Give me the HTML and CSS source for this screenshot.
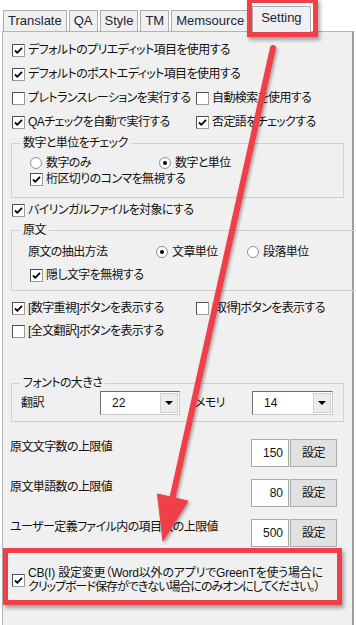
FILE: index.html
```html
<!DOCTYPE html>
<html lang="ja">
  <head>
    <meta charset="UTF-8" />
    <meta name="viewport" content="width=device-width, initial-scale=1.0" />
    <title>Setting</title>
    <link rel="stylesheet" href="styles.css">
  </head>
  <body>
    <div class="window">
      <div class="tabs">
        <div class="tab">Translate</div>
        <div class="tab">QA</div>
        <div class="tab">Style</div>
        <div class="tab">TM</div>
        <div class="tab">Memsource</div>
        <div class="tab active">Setting</div>
      </div>

      <div class="panel">
        <div class="row">
          <span class="box on"><svg viewBox="0 0 11 11"><path d="M2 5.5 L4.3 7.8 L9 2.8" /></svg></span>
          デフォルトのプリエディット項目を使用する
        </div>
        <div class="row">
          <span class="box on"><svg viewBox="0 0 11 11"><path d="M2 5.5 L4.3 7.8 L9 2.8" /></svg></span>
          デフォルトのポストエディット項目を使用する
        </div>
        <div class="row">
          <div class="col"><span class="box"></span>プレトランスレーションを実行する</div>
          <div class="col"><span class="box"></span>自動検索を使用する</div>
        </div>
        <div class="row">
          <div class="col">
            <span class="box on"><svg viewBox="0 0 11 11"><path d="M2 5.5 L4.3 7.8 L9 2.8" /></svg></span>QAチェックを自動で実行する
          </div>
          <div class="col">
            <span class="box on"><svg viewBox="0 0 11 11"><path d="M2 5.5 L4.3 7.8 L9 2.8" /></svg></span>否定語をチェックする
          </div>
        </div>

        <fieldset class="group units">
          <legend>数字と単位をチェック</legend>
          <div class="row sm">
            <div class="col narrow"><span class="radio"></span>数字のみ</div>
            <div class="col"><span class="radio on"></span>数字と単位</div>
          </div>
          <div class="row sm">
            <span class="box on"><svg viewBox="0 0 11 11"><path d="M2 5.5 L4.3 7.8 L9 2.8" /></svg></span>桁区切りのコンマを無視する
          </div>
        </fieldset>

        <div class="row">
          <span class="box on"><svg viewBox="0 0 11 11"><path d="M2 5.5 L4.3 7.8 L9 2.8" /></svg></span>
          バイリンガルファイルを対象にする
        </div>

        <fieldset class="group source">
          <legend>原文</legend>
          <div class="row">
            <div class="col method">原文の抽出方法</div>
            <div class="col by-sentence"><span class="radio on"></span>文章単位</div>
            <div class="col"><span class="radio"></span>段落単位</div>
          </div>
          <div class="row md">
            <span class="box on"><svg viewBox="0 0 11 11"><path d="M2 5.5 L4.3 7.8 L9 2.8" /></svg></span>隠し文字を無視する
          </div>
        </fieldset>

        <div class="row buttons-first">
          <div class="col">
            <span class="box on"><svg viewBox="0 0 11 11"><path d="M2 5.5 L4.3 7.8 L9 2.8" /></svg></span>[数字重視]ボタンを表示する
          </div>
          <div class="col"><span class="box"></span>[取得]ボタンを表示する</div>
        </div>
        <div class="row md">
          <span class="box"></span>[全文翻訳]ボタンを表示する
        </div>

        <fieldset class="group font">
          <legend>フォントの大きさ</legend>
          <div class="row">
            <div class="field-label">翻訳</div>
            <div class="select"><span class="val">22</span><span class="drop"></span></div>
            <div class="field-label memory">メモリ</div>
            <div class="select wide"><span class="val">14</span><span class="drop"></span></div>
          </div>
        </fieldset>

        <div class="limit first">
          <div class="limit-label">原文文字数の上限値</div>
          <div class="num">150</div>
          <div class="set">設定</div>
        </div>
        <div class="limit">
          <div class="limit-label">原文単語数の上限値</div>
          <div class="num">80</div>
          <div class="set">設定</div>
        </div>
        <div class="limit">
          <div class="limit-label">ユーザー定義ファイル内の項目数の上限値</div>
          <div class="num">500</div>
          <div class="set">設定</div>
        </div>

        <div class="row cb">
          <span class="box on"><svg viewBox="0 0 11 11"><path d="M2 5.5 L4.3 7.8 L9 2.8" /></svg></span>
          <div class="cb-text">
            <div class="cb-line">CB(I) 設定変更（Word以外のアプリでGreenTを使う場合に</div>
            <div class="cb-line tight">クリップボード保存ができない場合にのみオンにしてください。）</div>
          </div>
        </div>
      </div>

      <!-- annotation overlay -->
      <div class="mark mark-tab"></div>
      <div class="mark mark-cb"></div>
      <svg class="arrow" viewBox="0 0 356 625">
        <defs>
          <filter id="shadow" x="-20%" y="-5%" width="140%" height="110%">
            <feDropShadow dx="1.5" dy="2" stdDeviation="1.5" flood-color="#000" flood-opacity="0.35" />
          </filter>
        </defs>
        <g filter="url(#shadow)" fill="#ef4049" stroke="#ef4049">
          <line x1="273" y1="48" x2="172" y2="500" stroke-width="6" stroke-linecap="round" />
          <polygon points="163,541 157.5,494 188,501" stroke-width="1" stroke-linejoin="round" />
        </g>
      </svg>
    </div>
  </body>
</html>
```

FILE: styles.css
```css
body {
  margin: 0;
  background-color: #ffffff;
  font-family: "Liberation Sans", "Noto Sans CJK JP", sans-serif;
  font-size: 12px;
  color: #111;
  font-feature-settings: "palt";
}
.window {
  position: relative;
  width: 356px;
  height: 625px;
  overflow: hidden;
}
.tabs {
  display: flex;
  align-items: flex-end;
  gap: 2px;
  height: 31px;
  padding-left: 3px;
  box-sizing: border-box;
}
.tab {
  height: 20px;
  padding: 0 4px;
  border: 1px solid #adadad;
  border-bottom: none;
  background-color: #f0f0f0;
  font-size: 13px;
  line-height: 19px;
  color: #1c2538;
}
.tab.active {
  position: relative;
  z-index: 1;
  height: 25px;
  margin: 0 0 -1px 1px;
  padding: 0 8px;
  line-height: 22px;
}
.panel {
  margin-left: 2px;
  width: 352px;
  height: 594px;
  box-sizing: border-box;
  padding: 6px 8px 0 8px;
  border: 1px solid #b4b4b4;
  border-right: 2px solid #9c9c9c;
  border-bottom: none;
  background-color: #f0f0f0;
  letter-spacing: -0.6px;
}
.row {
  display: flex;
  align-items: center;
  height: 24px;
  padding-left: 1px;
  line-height: 16px;
  white-space: nowrap;
}
.row.sm {
  height: 16px;
}
.row.md {
  height: 22px;
}
.col {
  display: flex;
  align-items: center;
  flex-shrink: 0;
  min-width: 0;
  width: 184px;
}
.col.narrow {
  width: 129px;
}
.box {
  display: inline-flex;
  flex-shrink: 0;
  width: 13px;
  height: 13px;
  box-sizing: border-box;
  margin-right: 3px;
  border: 1px solid;
  border-color: #4f4f4f #9a9a9a #9a9a9a #4f4f4f;
  background-color: #ffffff;
}
.box svg {
  width: 11px;
  height: 11px;
  fill: none;
  stroke: #000;
  stroke-width: 1.8;
}
.radio {
  display: inline-flex;
  align-items: center;
  justify-content: center;
  flex-shrink: 0;
  width: 12px;
  height: 12px;
  box-sizing: border-box;
  margin-right: 4px;
  border: 1px solid #8f8f8f;
  border-radius: 50%;
  background-color: #ffffff;
}
.radio.on::after {
  content: "";
  width: 4px;
  height: 4px;
  border-radius: 50%;
  background-color: #000;
}
.group {
  margin: 0;
  padding: 0 0 0 17px;
  border: 1px solid #d0d0d0;
}
.group legend {
  margin-left: -9px;
  padding: 0 3px;
  line-height: 16px;
}
.units {
  margin-top: 1px;
  padding-top: 4px;
  padding-bottom: 10px;
}
.source {
  padding-top: 2px;
  padding-bottom: 4px;
}
.method {
  width: 128px;
  margin-left: -2px;
}
.by-sentence {
  width: 91px;
}
.buttons-first {
  margin-top: 5px;
}
.font {
  margin-top: 33px;
  padding-left: 8px;
  padding-bottom: 6px;
}
.font legend {
  margin-left: 0;
}
.field-label {
  flex-shrink: 0;
  width: 79px;
}
.field-label.memory {
  width: 57px;
  margin-left: 15px;
}
.select {
  display: flex;
  flex-shrink: 0;
  width: 80px;
  height: 24px;
  box-sizing: border-box;
  border: 1px solid;
  border-color: #6e6e6e #c8c8c8 #c8c8c8 #6e6e6e;
  background-color: #ffffff;
  letter-spacing: 0;
}
.select.wide {
  width: 81px;
}
.select .val {
  flex: 1;
  padding-left: 11px;
  line-height: 22px;
}
.select .drop {
  display: flex;
  align-items: center;
  justify-content: center;
  width: 16px;
  margin: 1px;
  background-color: #ececec;
  border: 1px solid #d2d2d2;
}
.select .drop::after {
  content: "";
  border-left: 4px solid transparent;
  border-right: 4px solid transparent;
  border-top: 4px solid #000;
}
.limit {
  display: flex;
  align-items: flex-start;
  height: 28px;
  margin: 12px 0 0 -1px;
  line-height: 16px;
  white-space: nowrap;
}
.limit.first {
  margin-top: 17px;
}
.limit-label {
  flex-shrink: 0;
  width: 241px;
}
.num {
  flex-shrink: 0;
  width: 38px;
  height: 28px;
  box-sizing: border-box;
  padding-right: 5px;
  border: 1px solid #a8a8a8;
  background-color: #ffffff;
  text-align: right;
  line-height: 26px;
  letter-spacing: 0;
}
.set {
  flex-shrink: 0;
  width: 47px;
  height: 28px;
  box-sizing: border-box;
  margin-left: 1px;
  border: 1px solid #adadad;
  background-color: #e1e1e1;
  text-align: center;
  line-height: 26px;
}
.row.cb {
  height: 28px;
  margin-top: 19px;
}
.cb-line {
  line-height: 14px;
  letter-spacing: -0.2px;
}
.cb-line.tight {
  letter-spacing: -1px;
}
.mark {
  position: absolute;
  box-sizing: border-box;
  border: 5px solid #ef4049;
  box-shadow: 2px 3px 4px rgba(0, 0, 0, 0.35);
}
.mark-tab {
  left: 247px;
  top: -2px;
  width: 71px;
  height: 39px;
}
.mark-cb {
  left: 3px;
  top: 548px;
  width: 339px;
  height: 57px;
}
.arrow {
  position: absolute;
  left: 0;
  top: 0;
  width: 356px;
  height: 625px;
  pointer-events: none;
}
```
